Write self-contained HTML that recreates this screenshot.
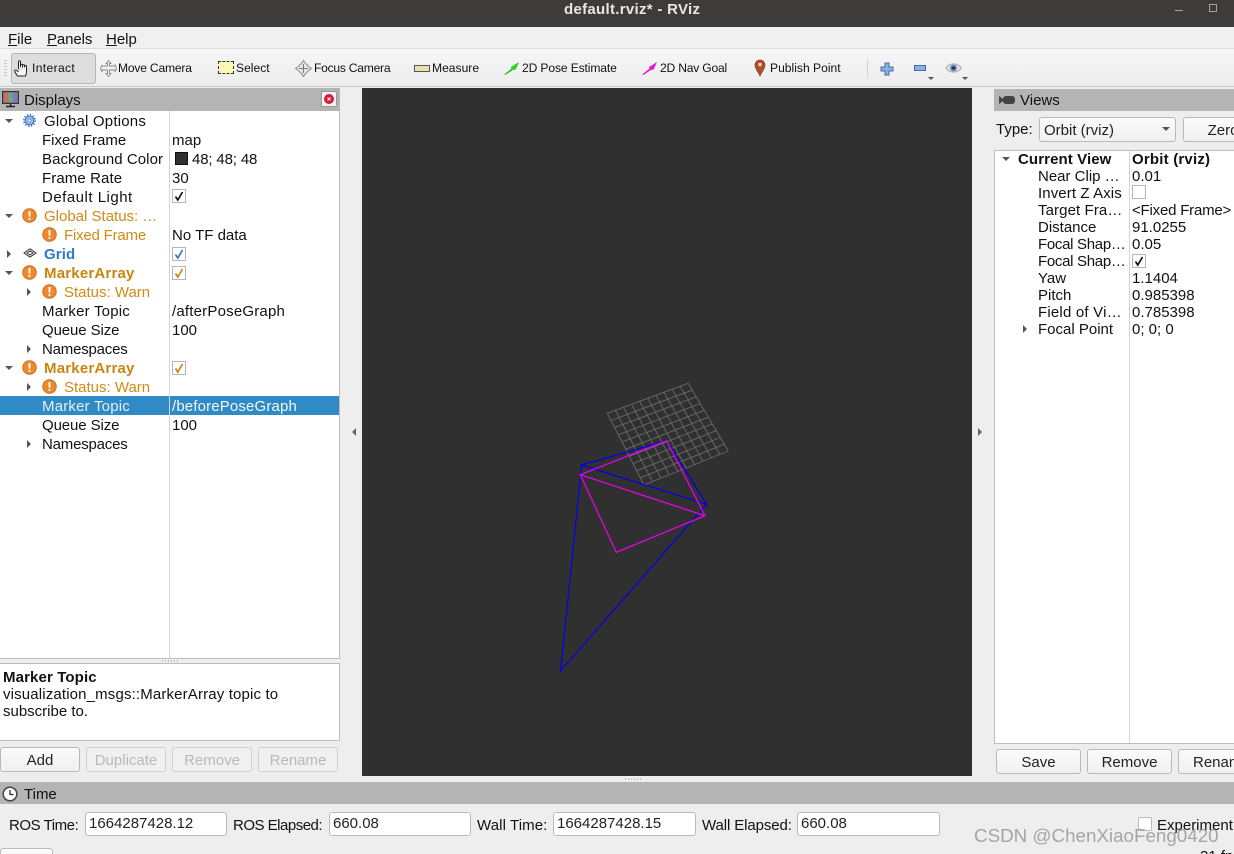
<!DOCTYPE html>
<html><head><meta charset="utf-8">
<style>
html{margin:0;padding:0;width:1234px;height:854px;overflow:hidden;background:#eeeeee}
body{margin:0;padding:0;width:1234px;height:854px;overflow:hidden;background:#eeeeee}
#p{position:relative;width:1234px;height:854px;overflow:hidden;font-family:"Liberation Sans",sans-serif;font-size:15px;color:#111}
.a{position:absolute}
.t{position:absolute;white-space:nowrap;line-height:19px;height:19px;margin-top:2px}
.s{font-size:12.1px}
.w{color:#d18a17}
.b{font-weight:bold;letter-spacing:.12px}
.btn{position:absolute;box-sizing:border-box;border:1px solid #b9b9b9;border-radius:3px;background:linear-gradient(#fbfbfb,#f0f0f0);text-align:center;height:25px;line-height:26px;color:#222}
.dis{color:#b8b8b8;background:#f0f0f0;border-color:#cfcfcf}
.inp{position:absolute;box-sizing:border-box;border:1px solid #bcbcbc;border-radius:3px;background:#fff;height:24px;line-height:22px;padding-left:3px;top:812px;color:#222}
.cb{position:absolute;box-sizing:border-box;width:14px;height:14px;border:1px solid #b5b5b5;background:#fff;left:172px}
.cb svg{position:absolute;left:0;top:0}
.tri{position:absolute;width:0;height:0}
.dn{border-left:4px solid transparent;border-right:4px solid transparent;border-top:4px solid #555}
.rt{border-top:4px solid transparent;border-bottom:4px solid transparent;border-left:4px solid #555}
.dot{position:absolute;height:2px;background:repeating-linear-gradient(90deg,#bdbdbd 0 1px,transparent 1px 3px)}
u{text-decoration:underline}
</style></head><body><div id="p">
<svg width="0" height="0" style="position:absolute"><defs>
<symbol id="warn" viewBox="0 0 16 16"><circle cx="8" cy="8" r="7.200" fill="#ee8a2c" stroke="#c96c1a" stroke-width="1"/><rect x="7" y="3.200" width="2" height="6" fill="#fff"/><rect x="7" y="10.600" width="2" height="2" fill="#fff"/></symbol>
<symbol id="chk" viewBox="0 0 12 12"><path d="M2.500 6.500L4.800 10L9.500 2" fill="none" stroke="currentColor" stroke-width="1.700"/></symbol>
</defs></svg>

<!-- title bar -->
<div class="a" style="left:0;top:0;width:1234px;height:27px;background:#3d3c3a"></div>
<div class="t b" style="left:564px;top:-1px;font-size:15px;color:#e9e7e3;line-height:18px;letter-spacing:.3px">default.rviz* - RViz</div>
<div class="a" style="left:1175px;top:10px;width:8px;height:1px;background:#a5a4a1"></div>
<div class="a" style="left:1209px;top:4px;width:6px;height:6px;border:1px solid #a5a4a1"></div>

<!-- menu -->
<div class="a" style="left:0;top:27px;width:1234px;height:21px;background:#f0f0f0"></div>
<div class="t" style="left:8px;top:28px"><u>F</u>ile</div>
<div class="t" style="left:47px;top:28px;letter-spacing:-.1px"><u>P</u>anels</div>
<div class="t" style="left:106px;top:28px"><u>H</u>elp</div>

<!-- toolbar -->
<div class="a" style="left:0;top:48px;width:1234px;height:39px;background:linear-gradient(#f6f6f6,#ededed);border-top:1px solid #dcdcdc;border-bottom:1px solid #c6c6c6;box-sizing:border-box"></div>
<div class="a" style="left:4px;top:60px;width:3px;height:16px;background:repeating-linear-gradient(#c8c8c8 0 1px,transparent 1px 3px)"></div>
<div class="a" style="left:11px;top:53px;width:85px;height:31px;box-sizing:border-box;background:#dddddd;border:1px solid #b5b5b5;border-radius:3px"></div>
<svg class="a" style="left:14px;top:60px" width="16" height="17" viewBox="0 0 16 17"><path d="M4.500 9V1.800C4.500.6 6.500.6 6.500 1.800V7M6.500 7V5.200C6.500 4 8.500 4 8.500 5.200V7.500M8.500 7V5.600C8.500 4.500 10.500 4.500 10.500 5.600V7.500M10.500 7V6.200C10.500 5.200 12.500 5.200 12.500 6.200V11C12.500 13 12 15 11.500 16H3.500C2.500 14.500 1.500 13 .8 11.500.4 10 1.800 9.500 2.800 10.500L4.500 12" fill="#f6f6f6" stroke="#222" stroke-width="1"/></svg>
<div class="t s" style="left:32px;top:57px;letter-spacing:.35px">Interact</div>

<svg class="a" style="left:100px;top:60px" width="17" height="17" viewBox="0 0 17 17"><path d="M8.500.5l2.500 3H9.500V6H15V4.500l1.500 4-1.500 3.500V10H9.500v3.500H11l-2.500 3-2.500-3h1.500V10H2v2L.5 8.500 2 5v1h5.500V3.500H6z" fill="#efefef" stroke="#888" stroke-width=".9"/></svg>
<div class="t s" style="left:118px;top:57px;letter-spacing:-.2px">Move Camera</div>

<div class="a" style="left:218px;top:61px;width:14px;height:11px;background:#fdf8b5;border:1px dashed #333"></div>
<div class="t s" style="left:236px;top:57px">Select</div>

<svg class="a" style="left:295px;top:60px" width="17" height="17" viewBox="0 0 17 17"><path d="M8.500.5l2.200 3.200a5.500 5.500 0 0 1 2.600 2.600L16.500 8.500l-3.200 2.200a5.500 5.500 0 0 1-2.600 2.600L8.500 16.500l-2.200-3.200a5.500 5.500 0 0 1-2.600-2.600L.5 8.500l3.200-2.200a5.500 5.500 0 0 1 2.600-2.600z" fill="#e6e6e6" stroke="#8a8a8a"/><path d="M8.500 4v9M4 8.500h9" stroke="#777"/></svg>
<div class="t s" style="left:314px;top:57px;letter-spacing:-.25px">Focus Camera</div>

<div class="a" style="left:414px;top:65px;width:14px;height:5px;background:#e6e0b0;border:1px solid #555"></div>
<div class="t s" style="left:432px;top:57px">Measure</div>

<svg class="a" style="left:504px;top:62px" width="15" height="13" viewBox="0 0 15 13"><path d="M.5 12.500L8 6.500 7 5.500 14.500.5 11 8 10 7 1.500 12.500z" fill="#19e019" stroke="#14b014" stroke-width=".5"/></svg>
<div class="t s" style="left:522px;top:57px;letter-spacing:-.13px">2D Pose Estimate</div>

<svg class="a" style="left:642px;top:62px" width="15" height="13" viewBox="0 0 15 13"><path d="M.5 12.500L8 6.500 7 5.500 14.500.5 11 8 10 7 1.500 12.500z" fill="#f010e0" stroke="#d010c0" stroke-width=".5"/></svg>
<div class="t s" style="left:660px;top:57px;letter-spacing:-.2px">2D Nav Goal</div>

<svg class="a" style="left:752px;top:59px" width="16" height="18" viewBox="0 0 16 18"><path d="M8 17C6 12.500 3 10 3 6a5 5 0 0 1 10 0c0 4-3 6.500-5 11z" fill="#b0502a" stroke="#8a3a1c" stroke-width=".7"/><circle cx="8" cy="5.500" r="1.700" fill="#f5d9c8"/></svg>
<div class="t s" style="left:770px;top:57px">Publish Point</div>

<div class="a" style="left:867px;top:59px;width:1px;height:19px;background:#d2d2d2"></div>
<svg class="a" style="left:880px;top:62px" width="14" height="14" viewBox="0 0 14 14"><path d="M5 1h4v4h4v4H9v4H5V9H1V5h4z" fill="#8fb0dd" stroke="#3c6fb0"/></svg>
<svg class="a" style="left:913px;top:64px" width="14" height="8" viewBox="0 0 14 8"><rect x="1.500" y="1.500" width="11" height="5" fill="#8fb0dd" stroke="#3c6fb0"/></svg>
<div class="tri dn" style="left:928px;top:77px;border-left-width:3px;border-right-width:3px;border-top-width:3px"></div>
<svg class="a" style="left:945px;top:61px" width="17" height="14" viewBox="0 0 17 14"><path d="M.8 7c3.500-5.500 12-5.500 15.400 0-3.400 5.500-11.900 5.500-15.400 0z" fill="#e2e2e2" stroke="#aaa"/><circle cx="8.500" cy="7" r="3.400" fill="#5f7fb8"/><circle cx="8.500" cy="7" r="1.300" fill="#111"/></svg>
<div class="tri dn" style="left:962px;top:77px;border-left-width:3px;border-right-width:3px;border-top-width:3px"></div>

<!-- Displays panel -->
<div class="a" style="left:0;top:88px;width:340px;height:23px;background:#b4b4b4"></div>
<svg class="a" style="left:2px;top:91px" width="17" height="17" viewBox="0 0 17 17"><rect x=".5" y=".5" width="16" height="12" fill="#777" stroke="#333"/><rect x="2" y="2" width="4.500" height="9" fill="#c96a6a"/><rect x="6.500" y="2" width="4" height="9" fill="#6fae6f"/><rect x="10.500" y="2" width="4.500" height="9" fill="#7a7ac8"/><path d="M8.500 13v2M4 15.500h9" stroke="#222" stroke-width="1.500"/></svg>
<div class="t" style="left:24px;top:89px">Displays</div>
<div class="a" style="left:321px;top:91px;width:16px;height:16px;box-sizing:border-box;background:#f4f4f4;border:1px solid #999;border-radius:2px"></div>
<svg class="a" style="left:324px;top:94px" width="10" height="10" viewBox="0 0 10 10"><circle cx="5" cy="5" r="5" fill="#d11c3c"/><path d="M3.500 3.500l3 3M6.500 3.500l-3 3" stroke="#fff" stroke-width="1"/></svg>

<div class="a" style="left:0;top:111px;width:340px;height:548px;background:#fff;border-right:1px solid #bdbdbd;border-bottom:1px solid #bdbdbd;box-sizing:border-box"></div>
<div class="a" style="left:0;top:396px;width:339px;height:19px;background:#2f8ac6"></div>
<div class="a" style="left:169px;top:111px;width:1px;height:547px;background:#d4d4d4"></div>
<div class="dot" style="left:162px;top:660px;width:16px"></div>

<div class="tri dn" style="left:5px;top:119px"></div>
<svg class="a" style="left:23px;top:114px" width="13" height="13" viewBox="0 0 13 13"><circle cx="6.500" cy="6.500" r="4.300" fill="#a9c3ea" stroke="#3f74c4" stroke-width="1.200"/><circle cx="6.500" cy="6.500" r="5.700" fill="none" stroke="#3f74c4" stroke-width="1.500" stroke-dasharray="1.500 1.500"/><circle cx="6.500" cy="6.500" r="1.600" fill="#fff" stroke="#3f74c4" stroke-width=".7"/></svg>
<div class="t" style="left:44px;top:110px;letter-spacing:.2px">Global Options</div>
<div class="t" style="left:42px;top:129px">Fixed Frame</div><div class="t" style="left:172px;top:129px">map</div>
<div class="t" style="left:42px;top:148px;letter-spacing:.06px">Background Color</div>
<div class="a" style="left:175px;top:152px;width:13px;height:13px;box-sizing:border-box;background:#303030;border:1px solid #111"></div>
<div class="t" style="left:192px;top:148px;letter-spacing:-.15px">48; 48; 48</div>
<div class="t" style="left:42px;top:167px;letter-spacing:.1px">Frame Rate</div><div class="t" style="left:172px;top:167px">30</div>
<div class="t" style="left:42px;top:186px;letter-spacing:.5px">Default Light</div>
<div class="cb" style="top:189px;color:#111"><svg width="12" height="12"><use href="#chk"/></svg></div>

<div class="tri dn" style="left:5px;top:214px"></div>
<svg class="a" style="left:22px;top:208px" width="15" height="15"><use href="#warn"/></svg>
<div class="t w" style="left:44px;top:205px">Global Status: …</div>
<svg class="a" style="left:42px;top:227px" width="15" height="15"><use href="#warn"/></svg>
<div class="t w" style="left:64px;top:224px;letter-spacing:-.2px">Fixed Frame</div><div class="t" style="left:172px;top:224px">No TF data</div>

<div class="tri rt" style="left:7px;top:250px"></div>
<svg class="a" style="left:23px;top:248px" width="14" height="10" viewBox="0 0 14 10"><path d="M7 .8L13 5 7 9.200 1 5z M4 5l3-2 3 2-3 2z" fill="none" stroke="#333" stroke-width="1"/></svg>
<div class="t b" style="left:44px;top:243px;color:#2f78c6">Grid</div>
<div class="cb" style="top:247px;color:#2f78c6"><svg width="12" height="12"><use href="#chk"/></svg></div>

<div class="tri dn" style="left:5px;top:271px"></div>
<svg class="a" style="left:22px;top:265px" width="15" height="15"><use href="#warn"/></svg>
<div class="t b" style="left:44px;top:262px;color:#cc8410;letter-spacing:.2px">MarkerArray</div>
<div class="cb" style="top:266px;color:#cc8410"><svg width="12" height="12"><use href="#chk"/></svg></div>

<div class="tri rt" style="left:27px;top:288px"></div>
<svg class="a" style="left:42px;top:284px" width="15" height="15"><use href="#warn"/></svg>
<div class="t w" style="left:64px;top:281px">Status: Warn</div>
<div class="t" style="left:42px;top:300px;letter-spacing:.2px">Marker Topic</div><div class="t" style="left:172px;top:300px;letter-spacing:.2px">/afterPoseGraph</div>
<div class="t" style="left:42px;top:319px;letter-spacing:-.1px">Queue Size</div><div class="t" style="left:172px;top:319px">100</div>
<div class="tri rt" style="left:27px;top:345px"></div>
<div class="t" style="left:42px;top:338px;letter-spacing:-.2px">Namespaces</div>

<div class="tri dn" style="left:5px;top:366px"></div>
<svg class="a" style="left:22px;top:360px" width="15" height="15"><use href="#warn"/></svg>
<div class="t b" style="left:44px;top:357px;color:#cc8410;letter-spacing:.2px">MarkerArray</div>
<div class="cb" style="top:361px;color:#cc8410"><svg width="12" height="12"><use href="#chk"/></svg></div>

<div class="tri rt" style="left:27px;top:383px"></div>
<svg class="a" style="left:42px;top:379px" width="15" height="15"><use href="#warn"/></svg>
<div class="t w" style="left:64px;top:376px">Status: Warn</div>
<div class="t" style="left:42px;top:395px;color:#e4eff8;letter-spacing:.2px">Marker Topic</div><div class="t" style="left:172px;top:395px;color:#f4f8fc;letter-spacing:.15px">/beforePoseGraph</div>
<div class="t" style="left:42px;top:414px;letter-spacing:-.1px">Queue Size</div><div class="t" style="left:172px;top:414px">100</div>
<div class="tri rt" style="left:27px;top:440px"></div>
<div class="t" style="left:42px;top:433px;letter-spacing:-.2px">Namespaces</div>

<!-- description -->
<div class="a" style="left:-1px;top:663px;width:341px;height:78px;box-sizing:border-box;background:#fff;border:1px solid #bdbdbd"></div>
<div class="t b" style="left:3px;top:666px">Marker Topic</div>
<div class="t" style="left:3px;top:683px;letter-spacing:.15px">visualization_msgs::MarkerArray topic to</div>
<div class="t" style="left:3px;top:700px">subscribe to.</div>

<div class="btn" style="left:0;top:747px;width:80px">Add</div>
<div class="btn dis" style="left:86px;top:747px;width:80px">Duplicate</div>
<div class="btn dis" style="left:172px;top:747px;width:80px">Remove</div>
<div class="btn dis" style="left:258px;top:747px;width:80px">Rename</div>

<!-- splitters -->
<div class="tri" style="left:352px;top:428px;border-top:4px solid transparent;border-bottom:4px solid transparent;border-right:4px solid #666"></div>
<div class="tri rt" style="left:978px;top:428px;border-left-color:#666"></div>
<div class="dot" style="left:625px;top:778px;width:16px"></div>

<!-- viewport -->
<svg class="a" style="left:362px;top:88px" width="610" height="688" viewBox="362 88 610 688">
<rect x="362" y="88" width="610" height="688" fill="#303030"/>
<g stroke="#6a6a6a" stroke-width=".9" fill="none">
<path d="M607.300 413.300L644 485M615.400 410.300L652.400 481.600M623.500 407.300L660.900 478.200M631.600 404.300L669.300 474.800M639.700 401.300L677.700 471.400M647.800 398.300L686.200 468M655.900 395.300L694.600 464.600M664 392.300L703 461.200M672.100 389.300L711.400 457.800M680.200 386.300L719.900 454.400M688.300 383.300L728.300 451"/>
<path d="M607.300 413.300L688.300 383.300M611 420.500L692.300 390.100M614.600 427.600L696.300 396.800M618.300 434.800L700.300 403.600M622 442L704.300 410.400M625.700 449.200L708.300 417.200M629.300 456.300L712.300 423.900M633 463.500L716.300 430.700M636.700 470.700L720.300 437.500M640.300 477.800L724.300 444.200M644 485L728.300 451"/>
</g>
<path d="M581.700 465L666.700 440.700L706.700 504.300Z M581.700 465L560.500 671L706.700 504.300" fill="none" stroke="#0000ee" stroke-width="1.200"/>
<path d="M580.300 474.700L666.700 440.700L705 515.700L616.300 552.300Z M580.300 474.700L705 515.700" fill="none" stroke="#ee00ee" stroke-width="1.200"/>
</svg>

<!-- Views -->
<div class="a" style="left:994px;top:89px;width:240px;height:22px;background:#b4b4b4"></div>
<svg class="a" style="left:998px;top:95px" width="18" height="10" viewBox="0 0 18 10"><path d="M1 1l4 3v2l-4 3z" fill="#444"/><rect x="5" y="1" width="12" height="8" rx="3" fill="#444"/></svg>
<div class="t" style="left:1020px;top:89px">Views</div>
<div class="t" style="left:996px;top:118px">Type:</div>
<div class="btn" style="left:1039px;top:117px;width:137px;text-align:left;padding-left:4px">Orbit (rviz)</div>
<div class="tri dn" style="left:1162px;top:127px"></div>
<div class="btn" style="left:1183px;top:117px;width:80px">Zero</div>

<div class="a" style="left:994px;top:150px;width:250px;height:594px;box-sizing:border-box;background:#fff;border:1px solid #bdbdbd"></div>
<div class="a" style="left:1129px;top:151px;width:1px;height:592px;background:#d4d4d4"></div>
<div class="tri dn" style="left:1002px;top:157px"></div>
<div class="t b" style="left:1018px;top:148px;letter-spacing:.1px">Current View</div><div class="t b" style="left:1132px;top:148px;letter-spacing:.2px">Orbit (rviz)</div>
<div class="t" style="left:1038px;top:165px">Near Clip …</div><div class="t" style="left:1132px;top:165px">0.01</div>
<div class="t" style="left:1038px;top:182px;letter-spacing:.1px">Invert Z Axis</div>
<div class="cb" style="left:1132px;top:185px"></div>
<div class="t" style="left:1038px;top:199px;letter-spacing:.1px">Target Fra…</div><div class="t" style="left:1132px;top:199px;letter-spacing:-.2px">&lt;Fixed Frame&gt;</div>
<div class="t" style="left:1038px;top:216px">Distance</div><div class="t" style="left:1132px;top:216px">91.0255</div>
<div class="t" style="left:1038px;top:233px;letter-spacing:-.3px">Focal Shap…</div><div class="t" style="left:1132px;top:233px">0.05</div>
<div class="t" style="left:1038px;top:250px;letter-spacing:-.3px">Focal Shap…</div>
<div class="cb" style="left:1132px;top:254px;color:#111"><svg width="12" height="12"><use href="#chk"/></svg></div>
<div class="t" style="left:1038px;top:267px">Yaw</div><div class="t" style="left:1132px;top:267px">1.1404</div>
<div class="t" style="left:1038px;top:284px">Pitch</div><div class="t" style="left:1132px;top:284px">0.985398</div>
<div class="t" style="left:1038px;top:301px;letter-spacing:.2px">Field of Vi…</div><div class="t" style="left:1132px;top:301px">0.785398</div>
<div class="tri rt" style="left:1023px;top:325px"></div>
<div class="t" style="left:1038px;top:318px">Focal Point</div><div class="t" style="left:1132px;top:318px">0; 0; 0</div>

<div class="btn" style="left:996px;top:749px;width:85px">Save</div>
<div class="btn" style="left:1087px;top:749px;width:85px">Remove</div>
<div class="btn" style="left:1178px;top:749px;width:85px;text-align:left;padding-left:14px">Rename</div>

<!-- Time -->
<div class="a" style="left:0;top:782px;width:1234px;height:22px;background:#b4b4b4"></div>
<svg class="a" style="left:2px;top:786px" width="16" height="16" viewBox="0 0 16 16"><circle cx="8" cy="8" r="6.800" fill="#fff" stroke="#444" stroke-width="1.500"/><path d="M8 4v4.500h3.500" fill="none" stroke="#222" stroke-width="1.200"/></svg>
<div class="t" style="left:24px;top:783px">Time</div>
<div class="t" style="left:9px;top:814px;letter-spacing:-.45px">ROS Time:</div>
<div class="inp" style="left:85px;width:142px">1664287428.12</div>
<div class="t" style="left:233px;top:814px;letter-spacing:-.5px">ROS Elapsed:</div>
<div class="inp" style="left:329px;width:142px">660.08</div>
<div class="t" style="left:477px;top:814px;letter-spacing:.1px">Wall Time:</div>
<div class="inp" style="left:553px;width:143px">1664287428.15</div>
<div class="t" style="left:702px;top:814px;letter-spacing:-.1px">Wall Elapsed:</div>
<div class="inp" style="left:797px;width:143px">660.08</div>
<div class="a" style="left:1138px;top:817px;width:14px;height:14px;box-sizing:border-box;background:#fff;border:1px solid #bdbdbd;border-radius:2px"></div>
<div class="t" style="left:1157px;top:814px">Experiment</div>
<div class="a" style="left:0;top:848px;width:53px;height:10px;box-sizing:border-box;background:#f8f8f8;border:1px solid #bdbdbd;border-radius:3px"></div>
<div class="t" style="left:1200px;top:845px">31 fps</div>

<!-- watermark -->
<div class="t" style="left:974px;top:823px;font-size:18.8px;line-height:22px;height:22px;color:rgba(120,120,120,.62)">CSDN @ChenXiaoFeng0420</div>
</div></body></html>
